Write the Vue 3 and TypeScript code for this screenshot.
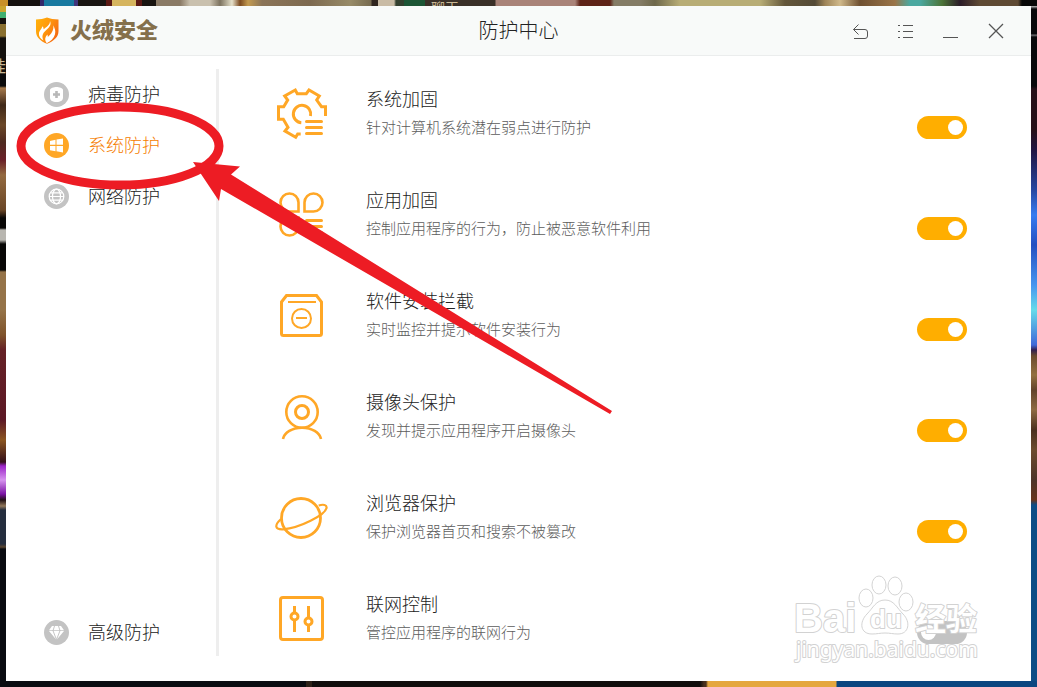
<script setup lang="ts">
import { ref } from 'vue'

type NavIcon = 'virus' | 'system' | 'network' | 'advanced'
type FeatureIcon = 'gear' | 'apps' | 'box' | 'camera' | 'planet' | 'sliders'

interface NavItem {
  id: NavIcon
  label: string
}

interface Feature {
  id: FeatureIcon
  title: string
  description: string
  enabled: boolean
}

const active = ref<NavIcon>('system')

const navItems: NavItem[] = [
  { id: 'virus', label: '病毒防护' },
  { id: 'system', label: '系统防护' },
  { id: 'network', label: '网络防护' },
  { id: 'advanced', label: '高级防护' },
]

const features = ref<Feature[]>([
  { id: 'gear', title: '系统加固', description: '针对计算机系统潜在弱点进行防护', enabled: true },
  { id: 'apps', title: '应用加固', description: '控制应用程序的行为，防止被恶意软件利用', enabled: true },
  { id: 'box', title: '软件安装拦截', description: '实时监控并提示软件安装行为', enabled: true },
  { id: 'camera', title: '摄像头保护', description: '发现并提示应用程序开启摄像头', enabled: true },
  { id: 'planet', title: '浏览器保护', description: '保护浏览器首页和搜索不被篡改', enabled: true },
  { id: 'sliders', title: '联网控制', description: '管控应用程序的联网行为', enabled: false },
])
</script>

<template>
  <div class="desktop">
    <svg class="backdrop" width="480" height="90" viewBox="0 0 480 90" aria-hidden="true">
      <text x="431" y="13" font-size="14">聊天</text>
      <text x="-10" y="72" font-size="16">挂</text>
    </svg>

    <div class="window">
      <header class="titlebar">
        <div class="brand">
          <svg class="brand-mark" viewBox="0 0 24 27" aria-hidden="true">
            <defs>
              <linearGradient id="shield" x1="0" y1="0" x2="1" y2="0.6">
                <stop offset="0" stop-color="#ffb30a" />
                <stop offset="0.5" stop-color="#ff9a0c" />
                <stop offset="1" stop-color="#f56a12" />
              </linearGradient>
            </defs>
            <path d="M1 2.500C5 2.500 9 1.800 12 .5c3 1.300 7 2 11.500 2v11.500c0 6-4.500 10-11.500 12.800C5 24 1 20 1 14z" fill="url(#shield)" />
            <path d="M15 4c1.800 4-1 6.500-4 9.300-3.500 3.200-4.500 6-2.500 10.200C5.200 21.800 3.400 19 4 15.800c.6-2.800 3-3.600 3.300-6.500 1 .8 1.400 1.800 1.300 3C11.500 10 15 8 15 4z" fill="#fff" />
            <path d="M18.300 8.300c1.600 3.500 2.500 5.500 1.700 9-.9 4-4.200 6.900-8.300 9-2.300-3-2-6 .6-8.800.5.900.7 1.700.5 2.600 3.600-3.200 6.200-6.800 5.500-11.800z" fill="#fff" />
          </svg>
          <span class="brand-name">火绒安全</span>
        </div>
        <h1 class="title">防护中心</h1>
        <div class="controls">
          <button type="button" aria-label="返回">
            <svg viewBox="0 0 17 17"><path d="M6.500 2.500l-5 5 5 5M1.500 7.500H13q2.500 0 2.500 2.500v4q0 2.500-2.500 2.500H2" /></svg>
          </button>
          <button type="button" aria-label="菜单">
            <svg viewBox="0 0 17 17"><path d="M1 3.500h2M6 3.500h10M1 9.500h2M6 9.500h10M1 15.500h2M6 15.500h10" /></svg>
          </button>
          <button type="button" aria-label="最小化">
            <svg viewBox="0 0 17 17"><path d="M1 15.500h15" /></svg>
          </button>
          <button type="button" aria-label="关闭">
            <svg viewBox="0 0 17 17"><path d="M2 2l14 14M16 2L2 16" stroke-width="1.300" /></svg>
          </button>
        </div>
      </header>

      <div class="body">
        <nav class="sidebar">
          <button
            v-for="item in navItems"
            :key="item.id"
            type="button"
            class="nav-item"
            :class="{ active: active === item.id, last: item.id === 'advanced' }"
            @click="active = item.id"
          >
            <svg class="nav-icon" viewBox="0 0 25 25" aria-hidden="true">
              <circle class="disc" cx="12.500" cy="12.500" r="12.500" />
              <template v-if="item.id === 'virus'">
                <path d="M12.500 5C15 5 19 6 19 8v7.500c0 3-2.500 4.500-6.500 4.500S6 18.500 6 15.500V8c0-2 4-3 6.500-3z" fill="#fff" />
                <path class="ink" d="M12.500 9v7M9 12.500h7" stroke-width="2.600" />
              </template>
              <template v-else-if="item.id === 'system'">
                <path d="M6 8l5.500-1.200v5H6zM12.500 6.600L19 5.500v6.300h-6.500zM6 13h5.500v5.200L6 17.300zM12.500 13H19v6.500l-6.500-1.200z" fill="#fff" />
              </template>
              <template v-else-if="item.id === 'network'">
                <g fill="none" stroke="#fff" stroke-width="1.200">
                  <circle cx="12.500" cy="12.500" r="7.300" />
                  <ellipse cx="12.500" cy="12.500" rx="4" ry="7.300" />
                  <path d="M5 12.500h15M6.500 8.800h12M6.500 16.200h12" />
                </g>
              </template>
              <template v-else>
                <path d="M8 6h9l3 4.300H5zM5 11h15l-7.500 9z" fill="#fff" />
                <path class="ink" d="M10.500 6L9 10.700l3.500 9M14.500 6l1.500 4.700-3.500 9" stroke-width="0.800" />
              </template>
            </svg>
            <span>{{ item.label }}</span>
          </button>
        </nav>

        <main class="features">
          <section v-for="feature in features" :key="feature.id" class="feature">
            <svg class="feature-icon" viewBox="0 0 54 54" aria-hidden="true">
              <template v-if="feature.id === 'gear'">
                <path d="M50.500 29v-9.300h-4L41.700 13l2.600-4L34 3l-2.700 3.700h-9L20.300 3 9.700 9l3 4-4 6.700H3.500v12.600H8.300l4.700 8L10 44l10.700 6.300 2-3.300h3" />
                <path d="M35.500 29a8.700 8.700 0 1 0-9.200 6.700" />
                <path d="M31.500 34.500h15M31.500 40.500h15M31.500 46.500h15" stroke-linecap="round" />
              </template>
              <template v-else-if="feature.id === 'apps'">
                <path d="M23.500 23.500v-9a9 9 0 1 0-9 9zM29.500 23.500v-9a9 9 0 1 1 9 9zM23.500 29.500h-9a9 9 0 1 0 9 9z" stroke-width="2.600" />
                <path d="M31.500 32.500h15M31.500 38.500h15M31.500 44.500h15" stroke-linecap="round" />
              </template>
              <template v-else-if="feature.id === 'box'">
                <path d="M6.500 13l5-6.500h30l5 6.500v31.500q0 2-2 2h-36q-2 0-2-2z" />
                <path d="M13 13h28M21 29h11" stroke-width="2" />
                <circle cx="26.500" cy="29.500" r="9.500" stroke-width="2" />
              </template>
              <template v-else-if="feature.id === 'camera'">
                <circle cx="27" cy="22" r="15.700" stroke-width="2.600" />
                <circle cx="27" cy="22" r="6.500" />
                <path d="M8 49C9.500 42.500 17 37.800 27 37.800S44.500 42.500 46 49" stroke-width="2.600" />
              </template>
              <template v-else-if="feature.id === 'planet'">
                <circle cx="26" cy="27" r="19.500" stroke-width="2.800" />
                <path d="M43.700 14.500c4.500-1.500 8.500-.8 7.800 2.500C50 24 25 37 8 38.300 0 38.700-1 34.500 6 28" stroke-width="2.200" />
              </template>
              <template v-else>
                <rect x="5.500" y="5.500" width="42" height="42" rx="2.500" />
                <path d="M19.500 14v7M19.500 28v12M33.500 14v12M33.500 33v7" />
                <circle cx="19.500" cy="24.500" r="3.500" />
                <circle cx="33.500" cy="29.500" r="3.500" />
              </template>
            </svg>
            <div class="copy">
              <h2 :id="`title-${feature.id}`">{{ feature.title }}</h2>
              <p>{{ feature.description }}</p>
            </div>
            <input
              v-model="feature.enabled"
              class="toggle"
              type="checkbox"
              role="switch"
              :aria-labelledby="`title-${feature.id}`"
            />
          </section>
        </main>
      </div>
    </div>

    <svg class="annotation" width="620" height="430" viewBox="0 0 620 430" aria-hidden="true">
      <ellipse cx="120" cy="146" rx="99" ry="39" fill="none" stroke="#ed1c24" stroke-width="9" />
      <path d="M193 162l47 4.500-9 8L612 411l-2 3L221 189l-2 12z" fill="#ed1c24" />
    </svg>

    <svg class="watermark" width="190" height="94" viewBox="0 0 190 94" aria-hidden="true">
      <g class="paw">
        <ellipse cx="73" cy="38" rx="7" ry="9" />
        <ellipse cx="86" cy="25" rx="7" ry="9" />
        <ellipse cx="102" cy="26" rx="7" ry="9" />
        <ellipse cx="113" cy="42" rx="7" ry="9" />
        <path d="M92 40c9 0 12 8 18 14 8 8 6 20-5 20-5 0-8-1-13-1s-8 1-13 1c-12 0-13-12-5-20 6-6 9-14 18-14z" />
      </g>
      <g class="mark-text">
        <text x="1" y="72" class="bai">Bai</text>
        <text x="77" y="68" class="du">du</text>
        <text x="122" y="70" class="jing">经验</text>
        <text x="3" y="97" class="site">jingyan.baidu.com</text>
      </g>
    </svg>
  </div>
</template>

<style>
html,
body {
  margin: 0;
}
</style>

<style scoped>
.desktop {
  position: relative;
  box-sizing: border-box;
  display: flex;
  min-height: 100vh;
  padding: 6px;
  overflow: hidden;
  font-family: 'Liberation Sans', 'Noto Sans CJK SC', sans-serif;
  background:
    linear-gradient(90deg, #c89028 8px, #15110f 8px 40px, #33286a 40px 44px, #1879a0 44px 74px, #40347a 74px 78px, #191512 78px 106px, #5a1813 106px 112px, #d5b45e 112px 136px, #5a1813 136px 142px, #181410 142px 156px, #8a7a66 156px 180px, #c9c0ae 190px 210px, #7d7360 220px, #e5e0ca 232px, #7c4a20 240px, #c39a50 248px, #8b7458 262px, #7d6950 310px, #988b68 350px, #776b50 371px, #30251f 372px 378px, #c9bba5 378px 394px, #33402f 396px 404px, #1c5535 404px 425px, #3a3028 425px 495px, #a98379 496px 575px, #5d2217 580px 610px, #847c66 614px 640px, #6e684b 655px, #b8ad76 680px 760px, #63563a 785px, #544a37 815px, #9e8458 825px, #d0b98b 840px, #6f5031 860px, #9a7448 895px, #4ba8a0 910px 920px, #4c7438 942px, #2b1c28 960px, #5f4a34 980px 1018px, #080808 1022px) top / 100% 6px no-repeat,
    linear-gradient(90deg, #090b10 306px, #2c2118 306px 312px, #100d0c 312px 700px, #49301d 704px 706px, #e5a73f 708px 836px, #0b4680 837px) bottom / 100% 6px no-repeat,
    linear-gradient(#caa52e 12px, #40b070 12px 18px, #16120e 18px 24px, #8a7030 24px 36px, #14110e 38px 74px, #0b0b0c 74px 86px, #a5794b 88px, #3f2818 105px, #6b4828 125px, #4e2a20 142px, #6a2028 160px, #946a40 175px, #6b4727 210px, #080706 218px 228px, #b8b6b0 230px 240px, #080706 244px 270px, #957348 272px 310px, #7f532a 335px, #652126 350px, #5c1825 420px, #8b5520 440px, #341019 462px, #9c25c8 466px, #d794ef 480px, #7b12a5 494px, #211014 500px, #92785a 506px, #252e3e 510px 544px, #5b4730 547px, #090b10 549px) left / 6px 100% no-repeat,
    linear-gradient(#c0c0c0 6px, #08080a 9px 34px, #77777a 35px, #08080a 37px 86px, #261018 89px 130px, #211442 150px, #2747a0 190px, #377cf0 215px, #244fc0 245px, #4795ef 285px, #66dbea 310px, #3f68d8 345px, #322050 350px, #6c4b2e 356px, #93703f 375px, #62432b 390px, #8e6a42 410px, #4b301f 430px, #6c4b2e 450px, #4d3429 480px, #67341c 500px, #0d4c85 505px) right / 6px 100% no-repeat,
    #090b10;
}

.backdrop {
  position: absolute;
  top: 0;
  left: 0;
  fill: #c9b794;
}

.window {
  position: relative;
  display: flex;
  flex: 1;
  flex-direction: column;
  min-width: 0;
  background: #fff;
}

.titlebar {
  display: grid;
  grid-template-columns: 1fr auto 1fr;
  align-items: center;
  height: 49px;
  padding: 0 13px;
  background: #f8faf9;
  border-bottom: 1px solid #ebeded;
}

.brand {
  display: flex;
  align-items: center;
  gap: 11px;
  padding-left: 16px;
}

.brand-mark {
  width: 24px;
  height: 27px;
}

.brand-name {
  color: #85704b;
  font-size: 22px;
  font-weight: 900;
  line-height: 32px;
}

.title {
  margin: 0;
  color: #222;
  font-size: 20px;
  font-weight: 300;
  line-height: 32px;
}

.controls {
  display: flex;
  justify-content: flex-end;
}

.controls button {
  display: flex;
  align-items: center;
  justify-content: center;
  width: 45px;
  height: 49px;
  padding: 0;
  background: none;
  border: 0;
}

.controls svg {
  width: 17px;
  height: 17px;
  fill: none;
  stroke: #555;
  stroke-width: 1;
}

.body {
  display: flex;
  flex: 1;
}

.sidebar {
  display: flex;
  flex-direction: column;
  gap: 24px;
  box-sizing: border-box;
  width: 213px;
  margin: 13px 0 25px;
  padding: 13px 0 9px;
  border-right: 3px solid #eee;
}

.nav-item {
  display: flex;
  align-items: flex-start;
  gap: 19px;
  height: 27px;
  padding: 0 0 0 38px;
  color: #222;
  font-family: inherit;
  font-size: 18px;
  font-weight: 300;
  line-height: 27px;
  background: none;
  border: 0;
  cursor: pointer;
}

.nav-item.last {
  margin-top: auto;
}

.nav-item.active {
  color: #f57c00;
}

.nav-icon {
  width: 25px;
  height: 25px;
}

.disc {
  fill: #c3c3c3;
}

.ink {
  fill: none;
  stroke: #b8b8b8;
}

.active .disc {
  fill: #ffa726;
}

.features {
  display: flex;
  flex: 1;
  flex-direction: column;
  gap: 45px;
  padding: 30px 64px 34px 56px;
}

.feature {
  display: flex;
  align-items: flex-start;
  height: 56px;
}

.feature-icon {
  width: 54px;
  height: 54px;
  margin-top: 1px;
  overflow: visible;
  fill: none;
  stroke: #ffa726;
  stroke-width: 3;
}

.copy {
  flex: 1;
  margin-left: 37px;
}

.copy h2 {
  margin: 0;
  color: #222;
  font-size: 18px;
  font-weight: 300;
  line-height: 28px;
}

.copy p {
  margin: 0;
  color: #5c5c5c;
  font-size: 15px;
  font-weight: 300;
  line-height: 28px;
}

.toggle {
  box-sizing: border-box;
  display: flex;
  align-items: center;
  width: 50px;
  height: 23px;
  margin: 30px 0 0;
  padding: 0 4px;
  background: #c3c3c3;
  border-radius: 12px;
  appearance: none;
  cursor: pointer;
}

.toggle::before {
  width: 15px;
  height: 15px;
  background: #fff;
  border-radius: 50%;
  content: '';
}

.toggle:checked {
  justify-content: flex-end;
  background: #ffae00;
}

.annotation {
  position: absolute;
  top: 0;
  left: 0;
  pointer-events: none;
}

.watermark {
  position: absolute;
  right: 54px;
  bottom: 33px;
  overflow: visible;
  pointer-events: none;
}

.paw {
  fill: #fff;
  stroke: #d4d4d4;
  stroke-width: 1;
}

.mark-text {
  fill: #fff;
  stroke: #d2d2d2;
  stroke-width: 2;
  stroke-linejoin: round;
  paint-order: stroke;
}

.bai {
  font-size: 40px;
  font-weight: 700;
}

.du {
  font-size: 26px;
  font-weight: 700;
}

.jing {
  font-size: 31px;
  font-weight: 700;
}

.site {
  font-family: 'Noto Sans', sans-serif;
  font-size: 21px;
}
</style>
